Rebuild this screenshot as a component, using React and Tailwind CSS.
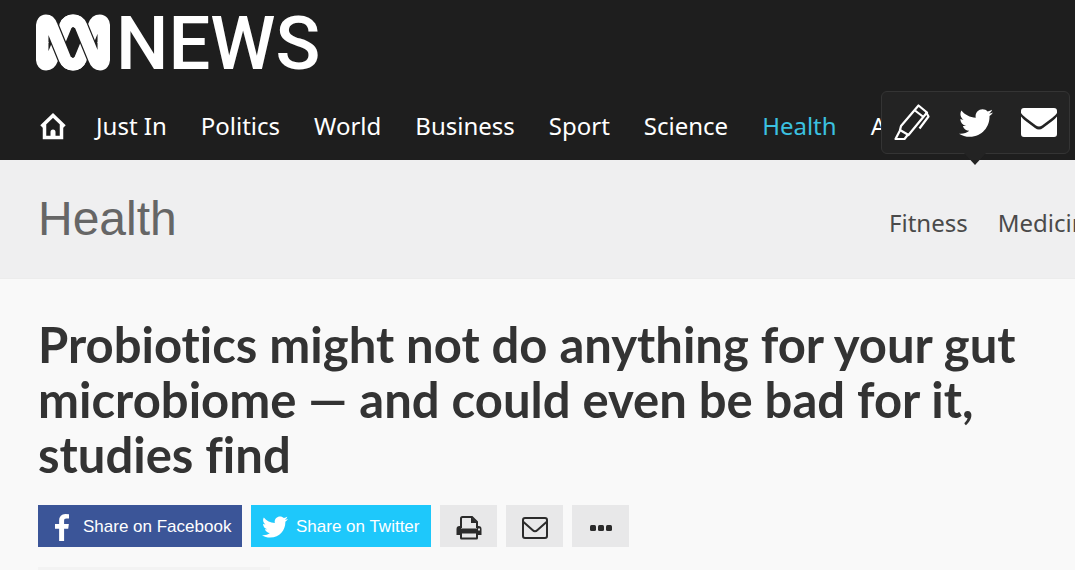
import { FaTwitter } from "react-icons/fa";

const navItems = ["Just In", "Politics", "World", "Business", "Sport", "Science", "Health", "Analysis"];
const topics = ["Fitness", "Medicine"];

function AbcMark() {
  return (
    <svg viewBox="0 0 74 57" className="h-[57px] w-[74px] shrink-0" fill="none" strokeWidth="12.5" aria-hidden="true">
      <path d="M6.2 28V45C6.2 52 13.5 52 16 45L29.5 12C32 5 42 5 44.5 12" stroke="#fff" />
      <path d="M67.8 29V12C67.8 5 60.5 5 58 12L44.5 45C42 52 32 52 29.5 45" stroke="#fff" />
      <path d="M15.5 12L29 45M45 12L58.500 45" stroke="#1e1e1e" strokeWidth="15" />
      <path d="M6.2 29V12C6.2 5 13 5 15.5 12L29 45C32 52 42 52 44.5 45" stroke="#fff" />
      <path d="M29.5 12C32 5 42 5 45 12L58.500 45C61 52 67.8 52 67.8 45V28" stroke="#fff" />
    </svg>
  );
}

function HomeIcon() {
  return (
    <svg viewBox="0 0 26 27" className="h-[27px] w-[26px]" aria-hidden="true">
      <path d="M1.500 13.500L13 2.500L24.500 13.500M4.500 11V24.500H21.500V11" fill="none" stroke="#fff" strokeWidth="3.500" />
      <path d="M10.500 25V19a2.500 2.500 0 0 1 5 0v6z" fill="#fff" />
    </svg>
  );
}

function HighlighterIcon() {
  return (
    <svg viewBox="0 0 36 37" className="h-[37px] w-9" fill="none" stroke="#fff" strokeWidth="2.200" strokeLinejoin="round" aria-hidden="true">
      <path d="M24.500 1.500L33 8.500L14.500 31L6 26L7 22Z" />
      <path d="M21 6.500L29.500 13M6.500 25.500L1.500 35H10.500L14 30.500" />
      <path d="M32 8L34.500 12.500L25.500 24.500" />
    </svg>
  );
}

function EnvelopeSolid() {
  return (
    <svg viewBox="0 0 36 29" className="h-[29px] w-9" fill="#fff" aria-hidden="true">
      <path d="M3 0H33Q36 0 36 3V5Q35 7 31 10L21 17.500Q18 19.500 15 17.500L5 10Q1 7 0 5V3Q0 0 3 0Z" />
      <path d="M0 8.500Q2 11 4 12.500L14 20Q18 23 22 20L32 12.500Q34 11 36 8.500V26Q36 29 33 29H3Q0 29 0 26Z" />
    </svg>
  );
}

function FacebookIcon() {
  return (
    <svg viewBox="95 0 864 1664" className="h-[27px] w-[26px]" fill="currentColor" aria-hidden="true">
      <path d="M959 12v264h-157q-86 0-116 36t-30 108v189h293l-39 296h-254v759h-306v-759h-255v-296h255v-218q0-186 104-288.500t277-102.500q147 0 228 12z" />
    </svg>
  );
}

function PrintIcon() {
  return (
    <svg viewBox="0 0 26 24" className="h-6 w-[26px]" fill="#2b2b2b" aria-hidden="true">
      <path d="M5 12V2.500Q5 1 6.500 1H16L21 6V12" fill="none" stroke="#2b2b2b" strokeWidth="2" />
      <path d="M15 1V7H21Z" />
      <path fillRule="evenodd" d="M3.500 10H5V12.500H21V10H22.500Q25.500 10 25.500 13V19H22V22Q22 23.500 20.500 23.500H5.500Q4 23.500 4 22V19H.5V13Q.5 10 3.500 10ZM6 17.500V21.500H20V17.500ZM22 12.500V14.500H24V12.500Z" />
    </svg>
  );
}

function EnvelopeOutline() {
  return (
    <svg viewBox="0 0 26 22" className="h-[22px] w-[26px]" fill="none" stroke="#2b2b2b" strokeWidth="2" strokeLinejoin="round" aria-hidden="true">
      <rect x="1" y="1" width="24" height="20" rx="2" />
      <path d="M1.500 5L10.500 13Q13 15.500 15.500 13L24.500 5" />
    </svg>
  );
}

function DotsIcon() {
  return (
    <svg viewBox="0 0 22 6" className="h-1.5 w-[22px]" fill="#2b2b2b" aria-hidden="true">
      <rect width="6" height="6" rx="1.500" />
      <rect x="8" width="6" height="6" rx="1.500" />
      <rect x="16" width="6" height="6" rx="1.500" />
    </svg>
  );
}

function SharePopup() {
  return (
    <div className="absolute right-[5px] top-[91px] flex h-[63px] w-[189px] items-center justify-between rounded-md border border-[#343434] bg-[#232323] px-3">
      <button aria-label="Highlight"><HighlighterIcon /></button>
      <button aria-label="Tweet"><FaTwitter className="size-[34px] text-white" /></button>
      <button aria-label="Email"><EnvelopeSolid /></button>
      <svg viewBox="0 0 22 12" className="absolute left-[82px] top-[61px] h-3 w-[22px]" fill="#232323" aria-hidden="true">
        <path d="M0 0H22L11 12Z" />
      </svg>
    </div>
  );
}

export default function App() {
  return (
    <div className="relative min-h-screen overflow-hidden bg-[#f9f9f9] font-['Noto_Sans',sans-serif] text-[#333]">
      <header className="bg-[#1e1e1e] pb-4 pt-3 text-white">
        <a href="#news" className="flex h-[60px] items-center gap-1.5 px-9" aria-label="ABC News">
          <AbcMark />
          <span className="pt-1 font-['Roboto',sans-serif] text-[74px] font-medium leading-none">NEWS</span>
        </a>
        <nav className="mt-9 flex h-9 items-center gap-[34px] overflow-hidden whitespace-nowrap pl-10 text-2xl">
          <a href="#home" aria-label="Home" className="-mr-1 shrink-0"><HomeIcon /></a>
          {navItems.map((item) => (
            <a key={item} href="#section" className={item === "Health" ? "text-[#3bc1e0]" : "text-white"}>
              {item}
            </a>
          ))}
        </nav>
      </header>

      <SharePopup />

      <section className="flex h-[119px] items-center overflow-hidden border-b border-[#ececec] bg-[#efeff0] pl-[38px]">
        <h2 className="w-[851px] shrink-0 font-['Liberation_Sans',sans-serif] text-5xl text-[#666]">Health</h2>
        <nav className="flex gap-[30px] whitespace-nowrap pt-2 text-2xl text-[#4a4a4a]">
          {topics.map((topic) => (
            <a key={topic} href="#topic">{topic}</a>
          ))}
        </nav>
      </section>

      <main className="px-[38px] pt-[38px]">
        <h1 className="whitespace-nowrap font-['Lato',sans-serif] text-[49px] font-bold leading-[55px] [font-variant-ligatures:none]">
          Probiotics might not do anything for your gut<br />
          microbiome — and could even be bad for it,<br />
          studies find
        </h1>

        <div className="mt-[23px] flex gap-[9px] font-['Liberation_Sans',sans-serif] text-[17px] text-white">
          <button className="flex h-[42px] w-[204px] items-center gap-2 bg-[#3b5598] pl-[11px] pt-0.5">
            <FacebookIcon />
            Share on Facebook
          </button>
          <button className="flex h-[42px] w-[180px] items-center gap-2 bg-[#1ec8fb] pl-[11px] pt-0.5">
            <FaTwitter className="size-[26px]" />
            Share on Twitter
          </button>
          <button aria-label="Print" className="flex h-[42px] w-[57px] items-center justify-center bg-[#e8e8e9] pt-1"><PrintIcon /></button>
          <button aria-label="Email" className="flex h-[42px] w-[57px] items-center justify-center bg-[#e8e8e9] pt-1"><EnvelopeOutline /></button>
          <button aria-label="More" className="flex h-[42px] w-[57px] items-center justify-center bg-[#e8e8e9] pt-1"><DotsIcon /></button>
        </div>

        <div className="mt-5 h-[3px] w-[232px] bg-[#f3f3f3]" />
      </main>
    </div>
  );
}
